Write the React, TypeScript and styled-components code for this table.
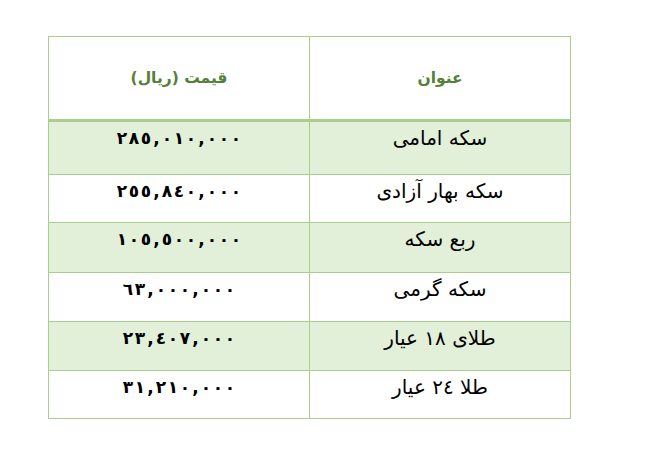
import React from "react";
import styled, { createGlobalStyle } from "styled-components";

const Global = createGlobalStyle`
  html, body { margin: 0; padding: 0; background: #ffffff; }
  body { font-family: "DejaVu Sans", "Noto Sans", sans-serif; }
`;

const Page = styled.div`
  padding: 36px 0 0 48px;
`;

const Table = styled.div`
  width: 523px;
  box-sizing: border-box;
  border: 1px solid #a8d08d;
  direction: rtl;
  display: flex;
  flex-direction: column;
`;

const HeaderRow = styled.div`
  display: grid;
  grid-template-columns: 261px 260px;
  height: 85px;
  box-sizing: border-box;
  border-bottom: 3px solid #a8d08d;
`;

const Row = styled.div<{ $h: number; $shaded: boolean; $last?: boolean }>`
  display: grid;
  grid-template-columns: 261px 260px;
  height: ${(p) => p.$h + (p.$last ? 0 : 1)}px;
  box-sizing: border-box;
  background: ${(p) => (p.$shaded ? "#e2efd9" : "#ffffff")};
  border-bottom: ${(p) => (p.$last ? "none" : "1px solid #a8d08d")};
`;

const HeadCell = styled.div<{ $divider?: boolean }>`
  display: flex;
  align-items: center;
  justify-content: center;
  border-left: ${(p) => (p.$divider ? "1px solid #a8d08d" : "none")};
  color: #538135;
  font-weight: bold;
  font-size: 15.5px;
`;

const TitleCell = styled.div`
  border-left: 1px solid #a8d08d;
  text-align: center;
  padding-top: 2px;
  font-size: 20px;
  line-height: 28px;
  color: #000;
`;

const PriceCell = styled.div`
  display: flex;
  justify-content: center;
  direction: ltr;
  padding-top: 4px;
  font-size: 17px;
  line-height: 24px;
  font-weight: bold;
  color: #000;
`;

const Glyph = styled.span<{ $narrow?: boolean }>`
  display: inline-block;
  width: ${(p) => (p.$narrow ? 9 : 12)}px;
  text-align: center;
`;

const rows = [
  { title: "سکه امامی", price: "٢٨٥,٠١٠,٠٠٠", h: 52 },
  { title: "سکه بهار آزادی", price: "٢٥٥,٨٤٠,٠٠٠", h: 47 },
  { title: "ربع سکه", price: "١٠٥,٥٠٠,٠٠٠", h: 49 },
  { title: "سکه گرمی", price: "٦٣,٠٠٠,٠٠٠", h: 48 },
  { title: "طلای ١٨ عیار", price: "٢٣,٤٠٧,٠٠٠", h: 48 },
  { title: "طلا ٢٤ عیار", price: "٣١,٢١٠,٠٠٠", h: 47 },
];

export default function App() {
  return (
    <>
      <Global />
      <Page>
        <Table>
          <HeaderRow>
            <HeadCell $divider>عنوان</HeadCell>
            <HeadCell>قیمت (ریال)</HeadCell>
          </HeaderRow>
          {rows.map((r, i) => (
            <Row key={i} $h={r.h} $shaded={i % 2 === 0} $last={i === rows.length - 1}>
              <TitleCell>{r.title}</TitleCell>
              <PriceCell>
                {Array.from(r.price).map((c, j) => (
                  <Glyph key={j} $narrow={c === ","}>
                    {c}
                  </Glyph>
                ))}
              </PriceCell>
            </Row>
          ))}
        </Table>
      </Page>
    </>
  );
}
